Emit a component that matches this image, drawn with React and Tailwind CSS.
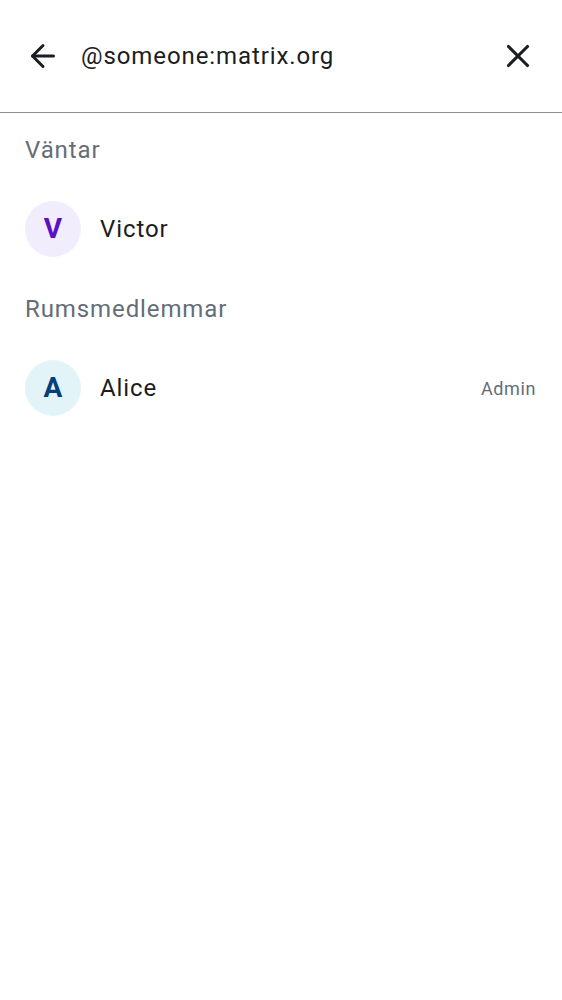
import { ArrowLeft, X } from "lucide-react";

function Avatar({ letter, bg, fg }) {
  return (
    <div className={`w-14 h-14 rounded-full flex items-center justify-center shrink-0 ${bg}`}>
      <span className={`text-[28px] font-bold leading-none ${fg}`}>{letter}</span>
    </div>
  );
}

function MemberRow({ name, letter, bg, fg, role }) {
  return (
    <div className="flex items-center h-[80px] pl-[25px] pr-[26px]">
      <Avatar letter={letter} bg={bg} fg={fg} />
      <span className="ml-[19px] text-[24px] tracking-[0.9px] text-[#1b1d22] flex-1">{name}</span>
      {role && <span className="text-[18px] tracking-[0.6px] text-[#656d77]">{role}</span>}
    </div>
  );
}

function SectionLabel({ children }) {
  return (
    <div className="px-[25px] h-[30px] leading-[30px] text-[24px] tracking-[0.9px] text-[#656d77]">
      {children}
    </div>
  );
}

export default function App() {
  return (
    <div className="min-h-screen bg-white" style={{ fontFamily: "Roboto, sans-serif" }}>
      {/* Search bar */}
      <div className="h-[113px] flex items-center pl-[25px] pr-[25px] border-b border-[#8e8e93]">
        <ArrowLeft size={36} strokeWidth={2} className="text-[#1b1d22] shrink-0" />
        <span className="ml-[20px] text-[24px] tracking-[0.9px] text-[#1b1d22] flex-1">@someone:matrix.org</span>
        <X size={38} strokeWidth={2} className="text-[#1b1d22] shrink-0" />
      </div>

      {/* Pending */}
      <div className="pt-[22px]">
        <SectionLabel>Väntar</SectionLabel>
      </div>
      <div className="mt-[24px]">
        <MemberRow name="Victor" letter="V" bg="bg-[#f1edfd]" fg="text-[#5a0fc8]" />
      </div>

      {/* Room members */}
      <div className="mt-[25px]">
        <SectionLabel>Rumsmedlemmar</SectionLabel>
      </div>
      <div className="mt-[24px]">
        <MemberRow name="Alice" letter="A" bg="bg-[#e3f4f9]" fg="text-[#063e7a]" role="Admin" />
      </div>
    </div>
  );
}
